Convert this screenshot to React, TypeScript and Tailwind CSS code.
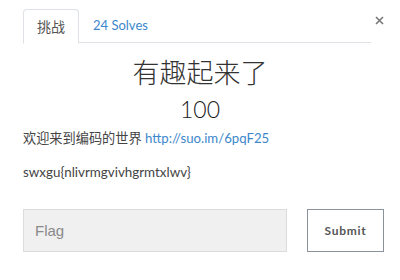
export default function App() {
  return (
    <div className="w-[400px] h-[280px] bg-white text-[#333] font-['Lato','Noto_Sans_CJK_SC',sans-serif] overflow-hidden">
      <div className="flex items-start pl-[23px] pt-[9px]">
        <div className="flex w-[348px] border-b border-[#dee2e6] h-[34px]">
          <div className="h-[35px] px-[13px] flex items-center border border-[#dee2e6] border-b-white rounded-t-[4px] bg-white text-[14px] text-[#555]">
            挑战
          </div>
          <div className="h-[34px] pl-[14px] flex items-center text-[13px] text-[#3c87cb]">
            24 Solves
          </div>
        </div>
        <button className="ml-[2px] mt-[5px] w-[12px] h-[12px] flex items-center justify-center text-[#777]">
          <svg width="9" height="9" viewBox="0 0 9 9">
            <path d="M1 1L8 8M8 1L1 8" stroke="currentColor" strokeWidth="1.6" />
          </svg>
        </button>
      </div>

      <div className="mt-[13px] h-[34px] leading-[34px] text-center text-[27px] font-light text-[#333]">
        有趣起来了
      </div>
      <div className="mt-[5px] h-[28px] leading-[28px] text-center text-[23px] font-light text-[#1a1a1a]">
        100
      </div>

      <div className="pl-[23px] pr-[17px]">
        <p className="mt-[5px] h-[20px] leading-[20px] text-[13.2px] text-[#444]">
          欢迎来到编码的世界{' '}
          <a href="#" className="text-[#3c87cb]">
            http://suo.im/6pqF25
          </a>
        </p>
        <p className="mt-[14px] h-[20px] leading-[20px] text-[13.4px] text-[#444]">
          swxgu{'{'}nlivrmgvivhgrmtxlwv{'}'}
        </p>

        <div className="mt-[27px] flex items-center">
          <input
            placeholder="Flag"
            className="shrink-0 w-[264px] h-[43px] bg-[#f0f0f0] border border-[#dcdcdc] px-[11px] text-[15px] font-['Liberation_Sans',sans-serif] placeholder:text-[#8a8a8a] outline-none"
          />
          <button className="shrink-0 ml-[20px] w-[77px] h-[43px] border border-[#8a929b] bg-white text-[12px] font-bold tracking-[0.7px] text-[#555]">
            Submit
          </button>
        </div>
      </div>
    </div>
  )
}
